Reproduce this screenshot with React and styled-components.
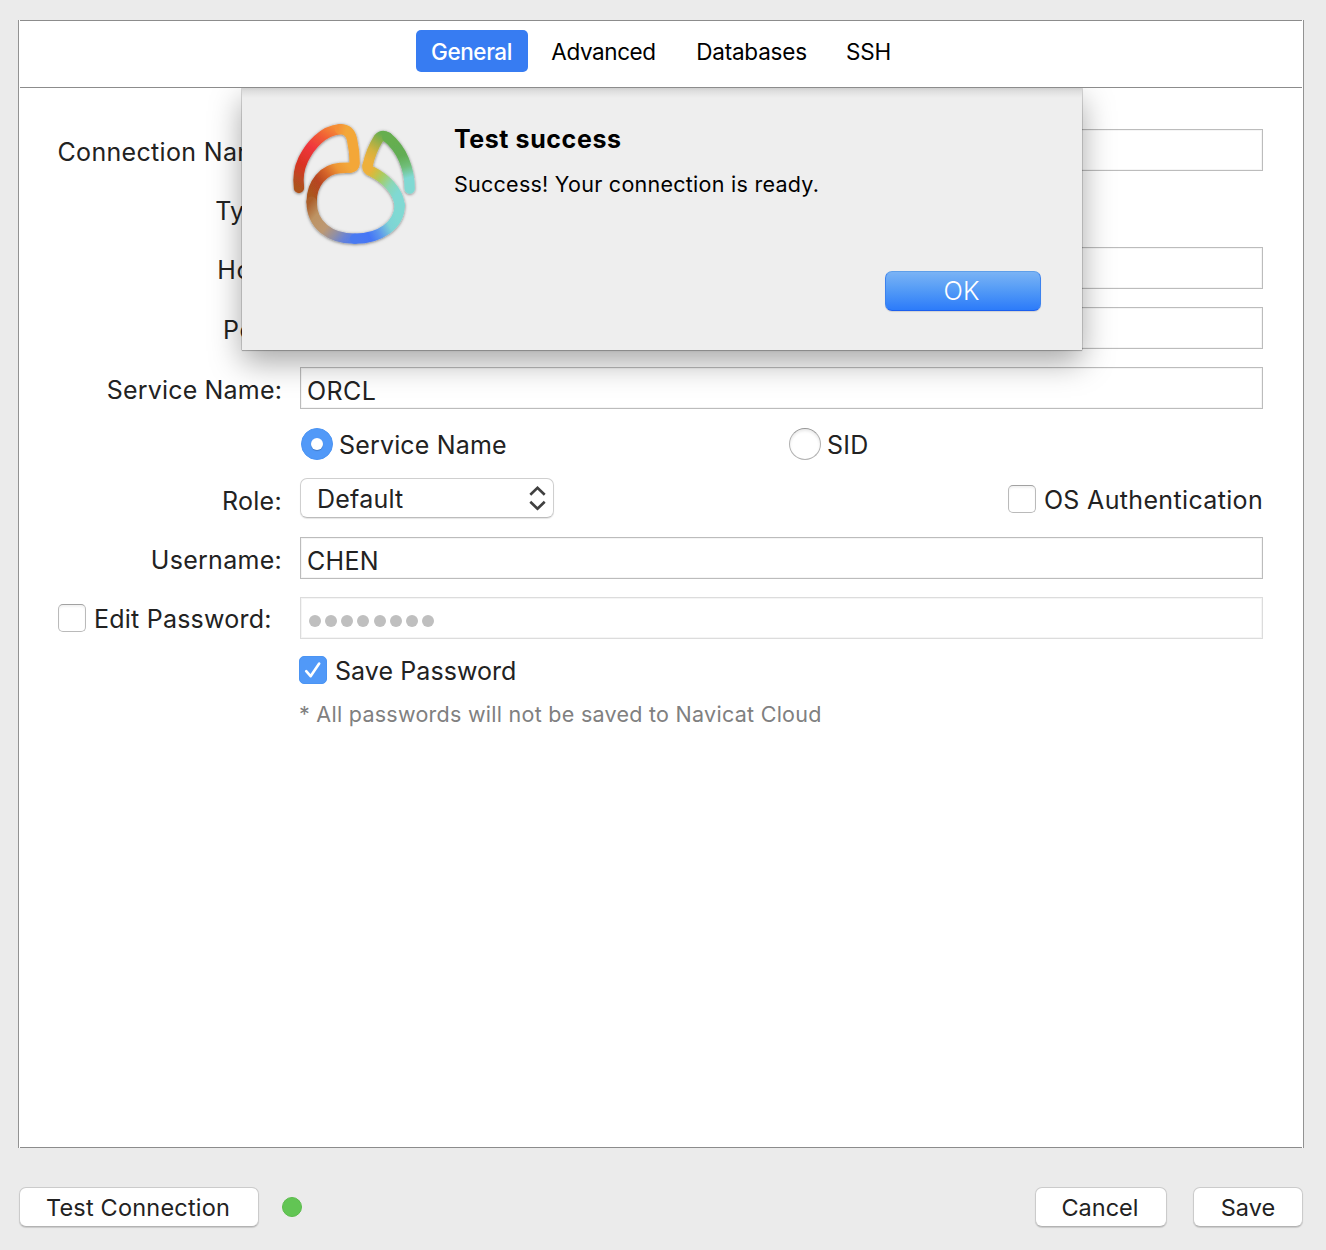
import React from "react";
import styled, { createGlobalStyle } from "styled-components";

const GlobalStyle = createGlobalStyle`
  *, *::before, *::after { box-sizing: border-box; }
  body {
    margin: 0;
    background: #ebebeb;
    font-family: Inter, "Liberation Sans", sans-serif;
    color: #222;
  }
`;

const Window = styled.div`
  width: 1326px;
  height: 1250px;
  padding: 20px 22px 0 18px;
  background: #ebebeb;
  display: flex;
  flex-direction: column;
  overflow: hidden;
`;

const Panel = styled.main`
  height: 1128px;
  flex: none;
  padding: 0 1px;
  background: #fff;
  border: solid #929292;
  border-width: 0 1px;
  display: flex;
`;

const PanelInner = styled.div`
  flex: 1;
  display: flex;
  flex-direction: column;
  border: solid #8c8c8c;
  border-width: 1px 0;
`;

const TabBar = styled.nav`
  height: 67px;
  flex: none;
  padding: 9px 0 0 396px;
  display: flex;
  align-items: flex-start;
  border-bottom: 1px solid #8c8c8c;
`;

const Tab = styled.button`
  width: ${(p) => p.$width}px;
  height: 42px;
  padding: 1px 1px 0 0;
  border: 0;
  border-radius: 5px;
  background: ${(p) => (p.$active ? "#377cf2" : "transparent")};
  color: ${(p) => (p.$active ? "#fff" : "#000")};
  font: ${(p) => (p.$active ? 500 : 400)} 22.5px Inter, sans-serif;
  letter-spacing: ${(p) => p.$track || 0}px;
  white-space: nowrap;
`;

const Body = styled.section`
  position: relative;
  flex: 1;
  overflow: hidden;
`;

const Form = styled.form`
  padding: 41px 39px 0 38px;
  display: flex;
  flex-direction: column;
`;

const Row = styled.div`
  display: grid;
  grid-template-columns: 242px 1fr;
  align-items: center;
  height: ${(p) => p.$height || 42}px;
  margin-top: ${(p) => p.$gap || 0}px;
`;

const Label = styled.label`
  display: flex;
  align-items: center;
  justify-content: flex-end;
  padding: ${(p) => p.$drop ?? 4}px 18px 0 0;
  font-size: 25px;
  line-height: 32px;
  letter-spacing: ${(p) => p.$track || 0}px;
  white-space: nowrap;
`;

const Field = styled.div`
  height: 42px;
  padding: 5px 6px 0;
  display: flex;
  align-items: center;
  border: 1px solid ${(p) => (p.$disabled ? "#dcdcdc" : "#bcbcbc")};
  box-shadow: inset 0 0 0 1px #f5f5f5;
  font-size: 25px;
  letter-spacing: ${(p) => p.$track || 0}px;
`;

const Dots = styled.div`
  display: flex;
  gap: 4.15px;
  padding: 0 0 0 2px;
`;

const Dot = styled.i`
  width: 12px;
  height: 12px;
  border-radius: 50%;
  background: #bfbfbf;
`;

const Choices = styled.div`
  display: flex;
  align-items: center;
  justify-content: ${(p) => (p.$spread ? "space-between" : "flex-start")};
`;

const Choice = styled.label`
  display: flex;
  align-items: center;
  gap: ${(p) => p.$space}px;
  width: ${(p) => (p.$width ? p.$width + "px" : "auto")};
  margin-left: ${(p) => p.$indent || 0}px;
  padding-top: ${(p) => p.$lower || 0}px;
  font-size: 25px;
  line-height: 30px;
  letter-spacing: ${(p) => p.$track || 0}px;
  white-space: nowrap;
`;

const ChoiceText = styled.span`
  padding-top: ${(p) => p.$drop ?? 1}px;
`;

const Radio = styled.span`
  width: 32px;
  height: 32px;
  flex: none;
  border-radius: 50%;
  display: grid;
  place-items: center;
  background: ${(p) => (p.$on ? "#5199f8" : "#fff")};
  border: 1px solid ${(p) => (p.$on ? "#4b94f3" : "#b2b2b2")};
  border-top-color: ${(p) => (p.$on ? "#4b94f3" : "#969696")};
  box-shadow: ${(p) => (p.$on ? "none" : "inset 0 2px 3px rgba(0,0,0,.09)")};

  &::after {
    content: "";
    width: 12px;
    height: 12px;
    border-radius: 50%;
    background: #fff;
    box-shadow: ${(p) => (p.$on ? "0 1px 1px rgba(0,0,0,.2)" : "none")};
  }
`;

const Box = styled.span`
  width: 28px;
  height: 28px;
  flex: none;
  border-radius: 5px;
  display: grid;
  place-items: center;
  background: ${(p) => (p.$on ? "#5199f8" : "#fff")};
  border: 1px solid ${(p) => (p.$on ? "#4b94f3" : "#bababa")};
  border-top-color: ${(p) => (p.$on ? "#4b94f3" : "#a2a2a2")};
  box-shadow: ${(p) => (p.$on ? "none" : "inset 0 2px 2px rgba(0,0,0,.05)")};
`;

const Select = styled.div`
  width: 254px;
  height: 40px;
  padding: 1px 7px 0 16px;
  display: flex;
  align-items: center;
  justify-content: space-between;
  border: 1px solid #cfcfcf;
  border-bottom-color: #bcbcbc;
  border-radius: 7px;
  box-shadow: 0 1px 1px rgba(0, 0, 0, 0.1);
  font-size: 25px;
  letter-spacing: ${(p) => p.$track || 0}px;
`;

const Note = styled.p`
  margin: 18px 0 0 241px;
  font-size: 21.5px;
  line-height: 28px;
  color: #808080;
  letter-spacing: 0.27px;
  white-space: nowrap;
`;

const Sheet = styled.div`
  position: absolute;
  top: 0;
  left: 222px;
  width: 840px;
  height: 262px;
  display: flex;
  background: linear-gradient(#cfcfcf, #dedede 3px, #e8e8e8 7px, #eee 10px);
  box-shadow: 0 0 1px rgba(0, 0, 0, 0.75), 0 1px 1px rgba(0, 0, 0, 0.15),
    0 12px 30px rgba(0, 0, 0, 0.35);
`;

const LogoSlot = styled.div`
  width: 170px;
  margin: 12px 14px 0 28px;
`;

const SheetContent = styled.div`
  flex: 1;
  padding: 35px 41px 0 0;
  display: flex;
  flex-direction: column;
  color: #000;
`;

const Title = styled.h1`
  margin: 0;
  font-size: 25px;
  font-weight: 700;
  line-height: 32px;
  letter-spacing: 0.58px;
`;

const Message = styled.p`
  margin: 15px 0 0;
  font-size: 21.5px;
  line-height: 28px;
  letter-spacing: 0.26px;
`;

const OkButton = styled.button`
  width: 156px;
  height: 40px;
  margin-top: 73px;
  padding: 0 3px 1px 0;
  align-self: flex-end;
  border: 1px solid #3c82ee;
  border-top-color: #5f9fe9;
  border-bottom-color: #1c5fee;
  border-radius: 7px;
  background: linear-gradient(#7ab3f5, #559cf6 45%, #2c7bfa);
  box-shadow: 0 1px 1px rgba(0, 0, 0, 0.12);
  color: #fff;
  font: 300 25.5px Inter, sans-serif;
`;

const Footer = styled.footer`
  height: 40px;
  margin: 39px 1px 0;
  display: flex;
  align-items: center;
`;

const PushButton = styled.button`
  width: ${(p) => p.$width}px;
  height: 40px;
  padding: 1px ${(p) => p.$nudge || 0}px 0 0;
  margin-left: ${(p) => p.$left || 0}px;
  border: 1px solid #cbcbcb;
  border-bottom-color: #b3b3b3;
  border-radius: 7px;
  background: #fff;
  box-shadow: 0 1px 1px rgba(0, 0, 0, 0.14);
  color: #222;
  font: 400 23.5px Inter, sans-serif;
  letter-spacing: ${(p) => p.$track || 0}px;
  white-space: nowrap;
`;

const Status = styled.span`
  width: 20px;
  height: 20px;
  margin: 0 auto 0 23px;
  border-radius: 50%;
  border: 1px solid #5bbb4b;
  background: #62c554;
`;

const STROKES = [
  {
    d: "M87 264C83 235 87 205 100 178C120 137 158 92 210 87.5",
    from: [87, 264], to: [205, 87],
    stops: [[0, "#ad521f"], [0.1, "#b94a20"], [0.3, "#da3324"], [0.58, "#f0363d"], [0.78, "#f05b36"], [1, "#f58f36"]],
  },
  {
    d: "M210 87.5C232 87 242 101 246 118C251 140 254 165 254 190Q254 203 240 203",
    from: [202, 90], to: [228, 95],
    stops: [[0, "#f58f36"], [1, "#f3a739"]],
  },
  {
    d: "M240 203L210 204C160 208 125 250 125 305",
    from: [240, 203], to: [125, 290],
    stops: [[0, "#f3a739"], [0.22, "#ee9633"], [0.45, "#d6662a"], [0.7, "#b74420"], [1, "#aa561f"]],
  },
  {
    d: "M125 305C125 375 180 416 255 416",
    from: [125, 300], to: [262, 416],
    stops: [[0, "#ab5f2b"], [0.22, "#bd9363"], [0.48, "#bc9873"], [0.68, "#8f8fa6"], [0.82, "#6882d6"], [1, "#4a7af0"]],
  },
  {
    d: "M255 416C330 416 389 375 389 315",
    from: [255, 416], to: [380, 352],
    stops: [[0, "#4a7af0"], [0.3, "#4576f6"], [0.52, "#5d97ec"], [0.78, "#7ed3d5"], [1, "#80d9d3"]],
  },
  {
    d: "M389 315C384 270 345 235 306 215Q289 209 293 196",
    from: [385, 275], to: [298, 212],
    stops: [[0, "#80d9d3"], [0.3, "#8bd6b4"], [0.62, "#a8cc62"], [0.85, "#d3bc40"], [1, "#edb03b"]],
  },
  {
    d: "M293 196C300 165 314 134 326 115Q337 103 352 112",
    from: [299, 185], to: [350, 112],
    stops: [[0, "#edb03b"], [0.35, "#d5b23e"], [0.65, "#a3b047"], [1, "#66ae4f"]],
  },
  {
    d: "M352 112C395 147 419 205 419 266",
    from: [385, 112], to: [425, 245],
    stops: [[0, "#66ae4f"], [0.4, "#62ad54"], [0.65, "#70be79"], [0.9, "#80d9d3"]],
  },
];

function Logo() {
  return (
    <svg width="170" height="160" viewBox="0 0 510 480" fill="none">
      <defs>
        {STROKES.map((s, i) => (
          <linearGradient
            key={i}
            id={`tone${i}`}
            gradientUnits="userSpaceOnUse"
            x1={s.from[0]}
            y1={s.from[1]}
            x2={s.to[0]}
            y2={s.to[1]}
          >
            {s.stops.map(([at, color]) => (
              <stop key={at} offset={at} stopColor={color} />
            ))}
          </linearGradient>
        ))}
        <filter id="soft" x="-10%" y="-10%" width="120%" height="120%">
          <feDropShadow dx="0" dy="2" stdDeviation="4" floodColor="#000" floodOpacity="0.5" />
        </filter>
      </defs>
      <g strokeWidth="31" strokeLinecap="round" strokeLinejoin="round" filter="url(#soft)">
        {STROKES.map((s, i) => (
          <path key={i} d={s.d} stroke={`url(#tone${i})`} />
        ))}
      </g>
    </svg>
  );
}

const Chevrons = () => (
  <svg width="18" height="26" viewBox="0 0 18 26" fill="none" stroke="#404040" strokeWidth="2.6">
    <path d="M2.3 8.8L9.5 1.8L16.7 8.8M2.3 15.8L9.5 22.8L16.7 15.8" />
  </svg>
);

const Check = () => (
  <svg width="20" height="20" viewBox="0 0 20 20" fill="none" stroke="#fff" strokeWidth="2.6" strokeLinecap="round" strokeLinejoin="round">
    <path d="M3.2 11.2L7.6 16.2L16.2 3.6" />
  </svg>
);

export default function App() {
  return (
    <>
      <GlobalStyle />
      <Window>
        <Panel>
          <PanelInner>
            <TabBar>
              <Tab $active $width={112} $track={-0.4}>General</Tab>
              <Tab $width={152} $track={-0.4}>Advanced</Tab>
              <Tab $width={144} $track={-0.2}>Databases</Tab>
              <Tab $width={90} $track={-0.2}>SSH</Tab>
            </TabBar>
            <Body>
              <Form>
                <Row>
                  <Label $track={0.33}>Connection Name:</Label>
                  <Field />
                </Row>
                <Row $gap={17}>
                  <Label $track={0.2}>Type:</Label>
                </Row>
                <Row $gap={17}>
                  <Label $track={0.5}>Host:</Label>
                  <Field />
                </Row>
                <Row $gap={18}>
                  <Label $track={0.6}>Port:</Label>
                  <Field />
                </Row>
                <Row $gap={18}>
                  <Label $track={0.17}>Service Name:</Label>
                  <Field $track={0.4}>ORCL</Field>
                </Row>
                <Row $gap={19} $height={32}>
                  <span />
                  <Choices>
                    <Choice $space={6} $indent={1} $width={488} $track={0.17}>
                      <Radio $on />
                      <ChoiceText $drop={2}>Service Name</ChoiceText>
                    </Choice>
                    <Choice $space={6} $track={0.3}>
                      <Radio />
                      <ChoiceText $drop={2}>SID</ChoiceText>
                    </Choice>
                  </Choices>
                </Row>
                <Row $gap={18} $height={40}>
                  <Label $drop={5} $track={0.3}>Role:</Label>
                  <Choices $spread>
                    <Select $track={0.22}>
                      Default
                      <Chevrons />
                    </Select>
                    <Choice $space={8} $lower={2} $track={0.34}>
                      <Box />
                      <ChoiceText>OS Authentication</ChoiceText>
                    </Choice>
                  </Choices>
                </Row>
                <Row $gap={19}>
                  <Label $track={0.28}>Username:</Label>
                  <Field $track={0.3}>CHEN</Field>
                </Row>
                <Row $gap={18}>
                  <Choice $space={8} $track={0.22}>
                    <Box />
                    <ChoiceText>Edit Password:</ChoiceText>
                  </Choice>
                  <Field $disabled>
                    <Dots>
                      {Array.from({ length: 8 }, (_, i) => (
                        <Dot key={i} />
                      ))}
                    </Dots>
                  </Field>
                </Row>
                <Row $gap={15} $height={28}>
                  <span />
                  <Choice $space={8} $indent={-1} $track={0.07}>
                    <Box $on>
                      <Check />
                    </Box>
                    <ChoiceText $drop={2}>Save Password</ChoiceText>
                  </Choice>
                </Row>
                <Note>* All passwords will not be saved to Navicat Cloud</Note>
              </Form>
              <Sheet role="dialog">
                <LogoSlot>
                  <Logo />
                </LogoSlot>
                <SheetContent>
                  <Title>Test success</Title>
                  <Message>Success! Your connection is ready.</Message>
                  <OkButton>OK</OkButton>
                </SheetContent>
              </Sheet>
            </Body>
          </PanelInner>
        </Panel>
        <Footer>
          <PushButton $width={240} $nudge={2} $track={0.2}>Test Connection</PushButton>
          <Status />
          <PushButton $width={132} $nudge={2}>Cancel</PushButton>
          <PushButton $width={110} $left={26}>Save</PushButton>
        </Footer>
      </Window>
    </>
  );
}
